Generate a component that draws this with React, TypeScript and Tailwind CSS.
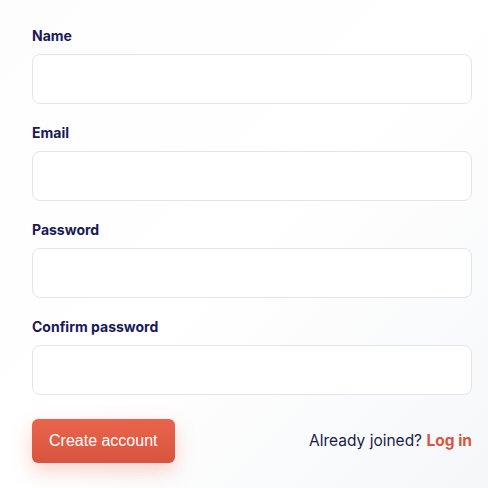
import { useState } from 'react';

const FIELDS = [
  { id: 'name', label: 'Name', type: 'text' },
  { id: 'email', label: 'Email', type: 'email' },
  { id: 'password', label: 'Password', type: 'password' },
  { id: 'confirm', label: 'Confirm password', type: 'password' },
];

export default function App() {
  const [form, setForm] = useState<Record<string, string>>({
    name: '',
    email: '',
    password: '',
    confirm: '',
  });

  return (
    <div className="min-h-[488px] bg-gradient-to-br from-[#fdfdfd] via-white to-[#f6f7f9] pl-8 pr-4 pt-[26px] font-['Inter',sans-serif]">
      <div className="flex flex-col gap-[19px]">
        {FIELDS.map((f) => (
          <div key={f.id} className="flex flex-col">
            <label htmlFor={f.id} className="mb-2 text-sm leading-5 font-bold text-[#19195a]">
              {f.label}
            </label>
            <input
              id={f.id}
              type={f.type}
              value={form[f.id]}
              onChange={(e) => setForm({ ...form, [f.id]: e.target.value })}
              className="h-[50px] w-full rounded-lg border border-[#e4e5e8] bg-white px-3 text-base outline-none"
            />
          </div>
        ))}
      </div>

      {/* Footer */}
      <div className="mt-6 flex items-center justify-between">
        <button className="h-[44px] rounded-md bg-gradient-to-b from-[#e9644b] to-[#d9543f] px-[17px] font-['Liberation_Sans',Arial,sans-serif] text-base text-white shadow-[0_8px_20px_rgba(232,96,74,0.28)]">
          Create account
        </button>
        <p className="text-[15.5px] text-[#1a1b4b]">
          Already joined?{' '}
          <a href="#" className="font-bold text-[#d9533f]">
            Log in
          </a>
        </p>
      </div>
    </div>
  );
}
